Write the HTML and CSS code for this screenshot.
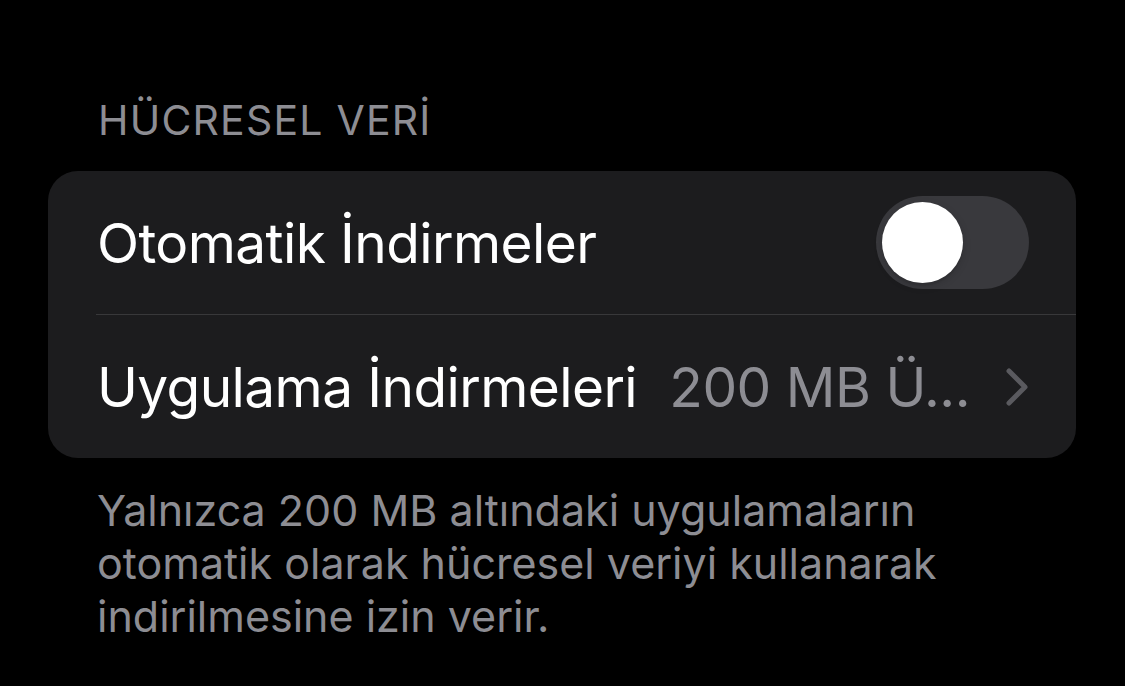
FILE: index.html
```html
<!DOCTYPE html>
<html lang="tr">
<head>
    <meta charset="UTF-8">
    <meta name="viewport" content="width=device-width, initial-scale=1.0">
    <title>Hücresel Veri</title>
    <link rel="stylesheet" href="styles.css">
</head>
<body>

    <div class="section">
        <h2 class="section-header">HÜCRESEL VERİ</h2>

        <div class="card">
            <div class="row">
                <span class="row-title">Otomatik İndirmeler</span>
                <div class="toggle">
                    <div class="toggle-knob"></div>
                </div>
            </div>
            <div class="separator"></div>
            <div class="row">
                <span class="row-title">Uygulama İndirmeleri</span>
                <span class="row-value">200 MB Ü...</span>
                <svg class="chevron" width="24" height="40" viewBox="0 0 24 40">
                    <polyline points="4,4 20,20 4,36" fill="none" stroke="#5a5a5f" stroke-width="5" stroke-linecap="round" stroke-linejoin="round"/>
                </svg>
            </div>
        </div>

        <p class="section-footer">Yalnızca 200 MB altındaki uygulamaların otomatik olarak hücresel veriyi kullanarak indirilmesine izin verir.</p>
    </div>

</body>
</html>
```

FILE: styles.css
```css
body {
    font-family: Inter, "Noto Sans", sans-serif;
    background-color: #000;
    color: #fff;
    margin: 0;
    padding: 0;
}

.section {
    padding: 96px 49px 0 48px;
}

.section-header {
    margin: 0 0 27px 0;
    padding-left: 50px;
    font-size: 41px;
    font-weight: 400;
    line-height: 48px;
    letter-spacing: 1.2px;
    color: #8d8d93;
}

.card {
    background-color: #1c1c1e;
    border-radius: 30px;
    overflow: hidden;
}

.row {
    display: flex;
    align-items: center;
    height: 143px;
    padding: 0 47px 0 49px;
}

.row-title {
    flex: 1;
    font-size: 55px;
    letter-spacing: -0.6px;
}

.row-value {
    font-size: 55px;
    color: #8d8d93;
    letter-spacing: -0.5px;
    margin-right: 35px;
}

.separator {
    height: 1px;
    margin-left: 48px;
    background-color: #38383a;
}

.toggle {
    display: flex;
    align-items: center;
    width: 153px;
    height: 93px;
    padding: 0 6px;
    box-sizing: border-box;
    border-radius: 47px;
    background-color: #39393d;
}

    .toggle-knob {
        width: 81px;
        height: 81px;
        border-radius: 50%;
        background-color: #fff;
        box-shadow: 0 3px 8px rgba(0, 0, 0, 0.15), 0 3px 1px rgba(0, 0, 0, 0.06);
    }

.section-footer {
    margin: 26px 0 0 0;
    padding: 0 100px 0 49px;
    font-size: 43px;
    line-height: 53px;
    color: #8d8d93;
}
```
